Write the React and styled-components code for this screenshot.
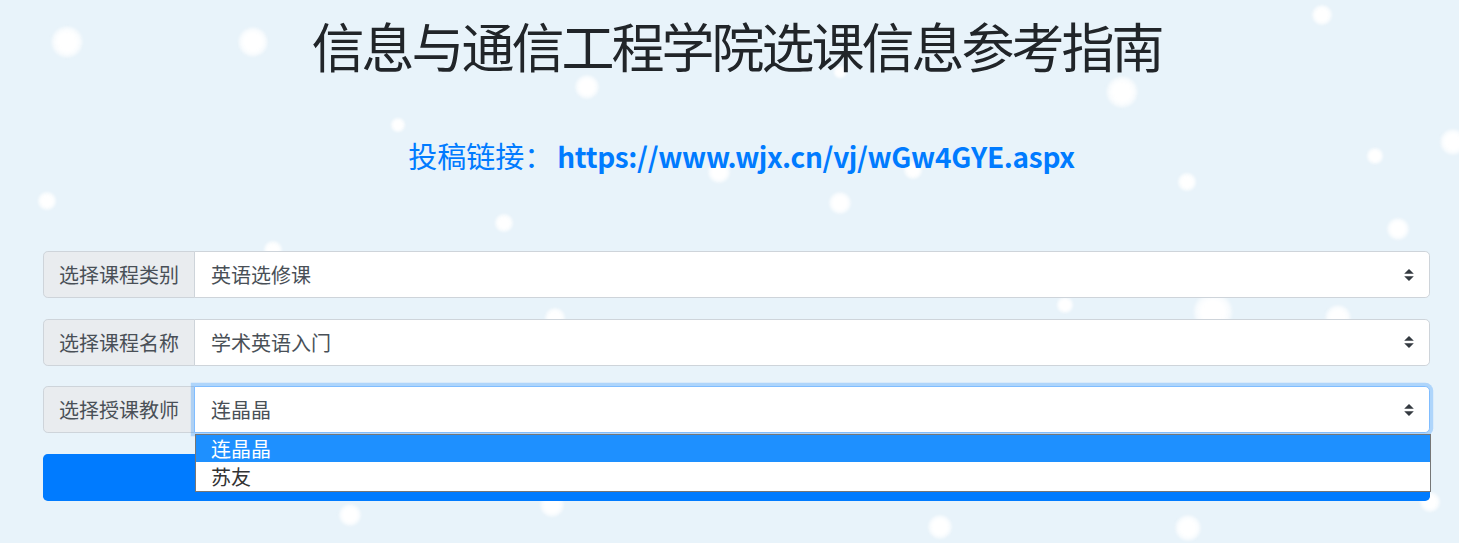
import React from "react";
import styled, { createGlobalStyle } from "styled-components";

const GlobalStyle = createGlobalStyle`
  html, body {
    margin: 0;
    padding: 0;
    background: #e8f3fa;
    font-family: "Noto Sans CJK SC", "Noto Sans", sans-serif;
    overflow: hidden;
  }
`;

const flakes = [
  [67, 42, 34], [253, 42, 32], [1322, 15, 22], [587, 87, 26], [1122, 92, 34],
  [1453, 142, 28], [1375, 156, 18], [1187, 182, 20], [1398, 229, 24], [47, 201, 20],
  [273, 250, 20], [398, 125, 16], [840, 72, 14], [719, 172, 24], [913, 170, 20],
  [840, 203, 24], [504, 223, 20], [1213, 312, 42], [1338, 318, 28], [1430, 502, 22],
  [1188, 528, 28], [552, 505, 26], [940, 527, 26], [350, 515, 24], [555, 318, 22],
  [1065, 305, 18]
];

const Page = styled.div`
  position: relative;
  width: 1459px;
  height: 543px;
  overflow: hidden;
`;

const Snow = styled.div`
  position: absolute;
  inset: 0;
  z-index: 0;
  pointer-events: none;
`;

const Flake = styled.span`
  position: absolute;
  border-radius: 50%;
  background: radial-gradient(circle, #ffffff 35%, rgba(255, 255, 255, 0.7) 55%, rgba(255, 255, 255, 0) 70%);
  filter: blur(1px);
`;

const Content = styled.main`
  position: relative;
  z-index: 1;
  padding: 14px 29px 0 43px;
`;

const Title = styled.h1`
  margin: 0;
  text-align: center;
  font-size: 53px;
  letter-spacing: -3px;
  line-height: 1.2;
  font-weight: 400;
  color: #212529;
`;

const LinkLine = styled.p`
  margin: 56px 0 0;
  height: 42px;
  text-align: center;
  font-size: 29px;
  line-height: 42px;
  color: #007bff;
  padding-left: 10px;
`;

const Url = styled.a`
  margin-left: 4px;
  color: #007bff;
  font-size: 28px;
  font-weight: 700;
  letter-spacing: -0.3px;
  text-decoration: none;
`;

const Form = styled.form`
  margin-top: 75.5px;
  display: flex;
  flex-direction: column;
  gap: 20.5px;
`;

const InputGroup = styled.div`
  display: flex;
  height: 47px;
`;

const Prepend = styled.span`
  flex: none;
  width: 152px;
  box-sizing: border-box;
  display: flex;
  align-items: center;
  justify-content: center;
  background: #e9ecef;
  border: 1px solid #ced4da;
  border-radius: 4.8px 0 0 4.8px;
  color: #495057;
  font-size: 20px;
`;

const SelectWrap = styled.div`
  position: relative;
  flex: 1;
  margin-left: -1px;
  z-index: ${p => (p.$focused ? 2 : 1)};
`;

const SelectBox = styled.div`
  height: 100%;
  box-sizing: border-box;
  display: flex;
  align-items: center;
  justify-content: space-between;
  padding: 0 15px 0 16px;
  background: #fff;
  border: 1px solid ${p => (p.$focused ? "#80bdff" : "#ced4da")};
  border-radius: 0 4.8px 4.8px 0;
  box-shadow: ${p => (p.$focused ? "0 0 0 3.2px rgba(0, 123, 255, 0.25)" : "none")};
  color: #495057;
  font-size: 20px;
`;

const ListBox = styled.ul`
  position: absolute;
  top: 100%;
  left: 1px;
  right: -1px;
  margin: 1px 0 0;
  padding: 0;
  list-style: none;
  background: #fff;
  border: 1px solid #767676;
  z-index: 3;
`;

const Option = styled.li`
  height: ${p => (p.$first ? 27 : 29)}px;
  display: flex;
  align-items: center;
  padding-left: 15px;
  font-size: 20px;
  background: ${p => (p.$selected ? "#1e90ff" : "#fff")};
  color: ${p => (p.$selected ? "#fff" : "#333")};
`;

const SubmitButton = styled.button`
  height: 47px;
  border: none;
  border-radius: 4.8px;
  background: #007bff;
  color: #fff;
  font-family: inherit;
  font-size: 20px;
`;

const Arrows = () => (
  <svg width="10" height="12" viewBox="0 0 4 5" aria-hidden="true">
    <path d="M2 0L0 2h4zm0 5L0 3h4z" fill="#343a40" />
  </svg>
);

const Field = ({ label, value, focused, options }) => (
  <InputGroup>
    <Prepend>{label}</Prepend>
    <SelectWrap $focused={focused}>
      <SelectBox $focused={focused}>
        <span>{value}</span>
        <Arrows />
      </SelectBox>
      {options && (
        <ListBox>
          {options.map((o, i) => (
            <Option key={o} $first={i === 0} $selected={o === value}>
              {o}
            </Option>
          ))}
        </ListBox>
      )}
    </SelectWrap>
  </InputGroup>
);

export default function App() {
  return (
    <Page>
      <GlobalStyle />
      <Snow>
        {flakes.map(([x, y, d], i) => (
          <Flake
            key={i}
            style={{ left: x - d / 2, top: y - d / 2, width: d, height: d }}
          />
        ))}
      </Snow>
      <Content>
        <Title>信息与通信工程学院选课信息参考指南</Title>
        <LinkLine>
          投稿链接：<Url href="#">https://www.wjx.cn/vj/wGw4GYE.aspx</Url>
        </LinkLine>
        <Form onSubmit={e => e.preventDefault()}>
          <Field label="选择课程类别" value="英语选修课" />
          <Field label="选择课程名称" value="学术英语入门" />
          <Field
            label="选择授课教师"
            value="连晶晶"
            focused
            options={["连晶晶", "苏友"]}
          />
          <SubmitButton type="submit">查询</SubmitButton>
        </Form>
      </Content>
    </Page>
  );
}
